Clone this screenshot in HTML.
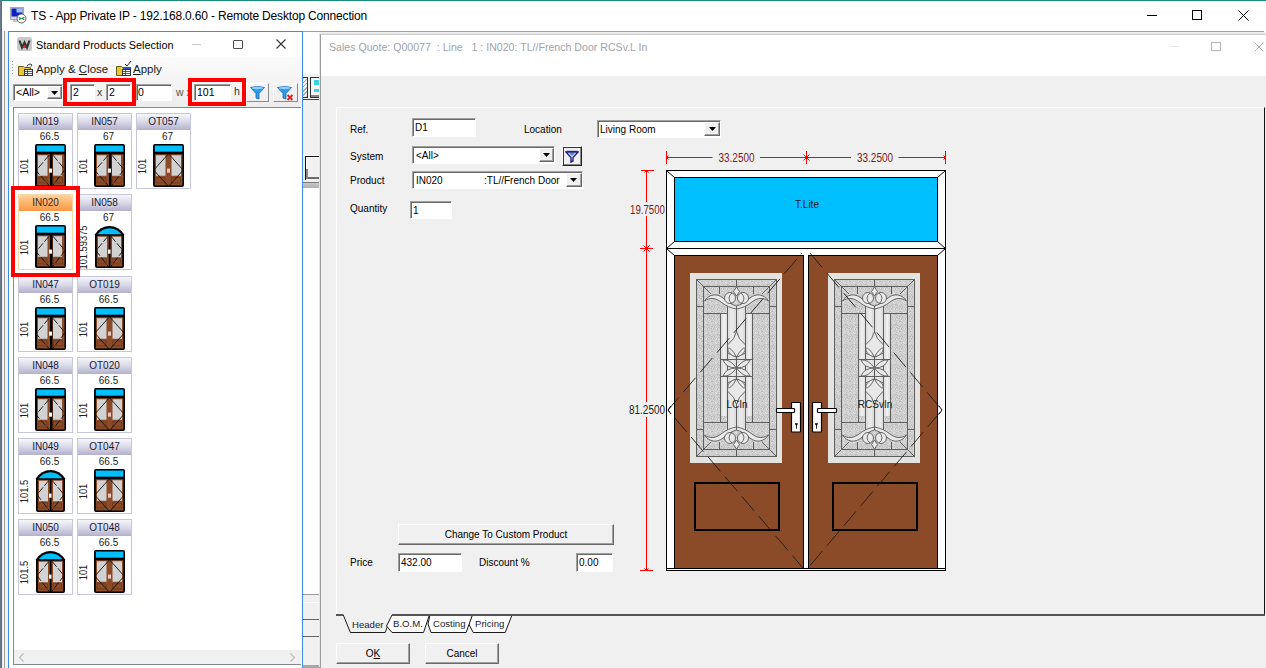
<!DOCTYPE html>
<html><head><meta charset="utf-8">
<style>
*{box-sizing:border-box;margin:0;padding:0}
html,body{width:1266px;height:668px;overflow:hidden;background:#fff;font-family:"Liberation Sans",sans-serif;position:relative}
.a{position:absolute}
.t{position:absolute;white-space:nowrap;line-height:1}
.inp{position:absolute;background:#fff;border-top:1px solid #a0a0a0;border-left:1px solid #a0a0a0;border-right:1px solid #fff;border-bottom:1px solid #fff;box-shadow:inset 1px 1px 0 #696969, 0 0 0 0 #e3e3e3}
.btn3d{position:absolute;background:#f0f0f0;border-top:1px solid #fff;border-left:1px solid #fff;border-right:1px solid #696969;border-bottom:1px solid #696969;box-shadow:inset -1px -1px 0 #a0a0a0}
.card{position:absolute;width:55px;height:76px;border:1px solid #c6c6dc;background:#fff}
.card .hd{position:absolute;left:0;top:0;right:0;height:16px;background:linear-gradient(#f6f6fa 0%,#dcdcea 45%,#b4b0cc 100%);border-radius:2px 2px 0 0;font-size:10px;color:#1a1a38;text-align:center;line-height:16px}
.card .w{position:absolute;left:0;right:0;top:17px;font-size:10px;text-align:center;color:#222;padding-left:8px}
.card .h{position:absolute;font-size:10px;color:#222;transform:rotate(-90deg) scaleX(0.93);transform-origin:center;left:-25px;width:60px;text-align:center;top:47px}

.lb{font-size:10px;color:#000}
.card .ic{position:absolute;left:16px;top:30px}
.card.sel{border-color:#f8d8a8}
.card.sel .hd{background:linear-gradient(#ffd2a0 0%,#ffb670 45%,#f89848 100%);color:#3a2a20}
</style></head><body>
<!-- outer window frame -->
<div class="a" style="left:0;top:0;width:1266px;height:1px;background:#1a8c7c"></div>
<div class="a" style="left:0;top:0;width:1px;height:668px;background:#6b7a8c"></div>
<div class="a" style="left:1px;top:0;width:1px;height:668px;background:#1a8c7c"></div>
<!-- title bar -->
<svg class="a" style="left:10px;top:7px" width="17" height="17" viewBox="0 0 17 17">
 <rect x="0.5" y="0.5" width="13" height="12" fill="#d8d8d8" stroke="#a8a8a8"/>
 <rect x="1.5" y="1.5" width="11" height="8" fill="#1020c8"/>
 <rect x="6.5" y="1.5" width="6" height="4" fill="#9cc4f4"/>
 <rect x="3" y="13" width="5" height="2" fill="#c8c8c8"/>
 <circle cx="11.5" cy="11.5" r="4.5" fill="#fff" stroke="#606060" stroke-width="1"/>
 <path d="M8.8 10.2l2 1.3-2 1.3M14.2 10.2l-2 1.3 2 1.3" stroke="#18a030" stroke-width="1.2" fill="none"/>
</svg>
<div class="t" style="left:31px;top:10px;font-size:12px;letter-spacing:-0.17px;color:#000">TS - App Private IP - 192.168.0.60 - Remote Desktop Connection</div>
<div class="a" style="left:1147px;top:15px;width:10px;height:1px;background:#000"></div>
<div class="a" style="left:1192px;top:10px;width:10px;height:10px;border:1px solid #000"></div>
<svg class="a" style="left:1238px;top:10px" width="11" height="11"><path d="M0.5 0.5L10.5 10.5M10.5 0.5L0.5 10.5" stroke="#000" stroke-width="1"/></svg>

<!-- RDP content background -->
<div class="a" style="left:2px;top:32px;width:1264px;height:636px;background:#f0f0f0"></div>
<div class="a" style="left:302px;top:31px;width:962px;height:1px;background:#a0a0a0"></div>
<div class="a" style="left:2px;top:31px;width:6px;height:637px;background:#f2f2f2"></div>
<div class="a" style="left:4px;top:31px;width:1px;height:637px;background:#a0a0a0"></div>

<svg width="0" height="0" style="position:absolute">
<defs>
<symbol id="ic_tl" viewBox="0 0 31 42">
 <rect x="0" y="0" width="31" height="42" rx="2" fill="#000"/>
 <rect x="1.8" y="1.5" width="27.6" height="6" fill="#00bfff"/>
 <rect x="2" y="10" width="13" height="30.5" fill="#8b4b28"/>
 <rect x="17.5" y="10" width="12" height="30.5" fill="#8b4b28"/>
 <rect x="3" y="11" width="9.5" height="20" fill="#d2d2d2"/>
 <rect x="18" y="11" width="9" height="20" fill="#d2d2d2"/>
 <rect x="3" y="33" width="9" height="5" fill="none" stroke="#6b3518" stroke-width="0.7"/>
 <rect x="18.5" y="33" width="9" height="5" fill="none" stroke="#6b3518" stroke-width="0.7"/>
 <path d="M14 11L1 26L15 41.5M18 11L30 25L17 41.5" stroke="#111" stroke-width="0.9" fill="none" stroke-dasharray="7 2"/>
 <rect x="14" y="24" width="3" height="4" fill="#fff"/>
</symbol>
<symbol id="ic_ot" viewBox="0 0 31 42">
 <rect x="0" y="0" width="31" height="42" rx="2" fill="#000"/>
 <rect x="1.8" y="1.5" width="27.6" height="6" fill="#00bfff"/>
 <rect x="1.8" y="10" width="27.6" height="30.5" fill="#8b4b28"/>
 <rect x="3" y="11" width="9.5" height="20" fill="#d2d2d2"/>
 <rect x="18.5" y="11" width="9.5" height="20" fill="#d2d2d2"/>
 <rect x="3" y="33" width="9" height="5" fill="none" stroke="#6b3518" stroke-width="0.7"/>
 <rect x="18.5" y="33" width="9" height="5" fill="none" stroke="#6b3518" stroke-width="0.7"/>
 <path d="M15.5 9.5L0.8 25.5L15.5 41.5L30.2 25.5Z" stroke="#111" stroke-width="0.9" fill="none"/>
 <rect x="14" y="24" width="3" height="4" fill="#f0c8c0"/>
</symbol>
<symbol id="ic_arch" viewBox="0 0 31 42">
 <path d="M1 9A17.1 17.1 0 0 1 30 9V40Q30 42 28 42H3Q1 42 1 40Z" fill="#000"/>
 <path d="M3.6 9A15.1 15.1 0 0 1 27.4 9Z" fill="#00bfff"/>
 <rect x="2.8" y="10.5" width="12" height="30" fill="#8b4b28"/>
 <rect x="16.5" y="10.5" width="11.7" height="30" fill="#8b4b28"/>
 <rect x="4" y="11.5" width="9" height="20" fill="#d2d2d2"/>
 <rect x="18" y="11.5" width="9" height="20" fill="#d2d2d2"/>
 <rect x="4" y="33" width="8.5" height="5" fill="none" stroke="#6b3518" stroke-width="0.7"/>
 <rect x="18" y="33" width="8.5" height="5" fill="none" stroke="#6b3518" stroke-width="0.7"/>
 <path d="M14 11L2 25L15 41.5M17 11L29 25L16 41.5" stroke="#111" stroke-width="0.9" fill="none" stroke-dasharray="7 2"/>
 <rect x="14" y="24" width="2.5" height="4" fill="#fff"/>
</symbol>
</defs></svg>
<!-- ============ LEFT DIALOG ============ -->
<div class="a" style="left:8px;top:31px;width:295px;height:637px;border:1px solid #3d8ee0;border-bottom:none;background:#fff"></div>
<div class="a" style="left:9px;top:57px;width:293px;height:50px;background:linear-gradient(#fbfbfb,#ededed)"></div>
<!-- title -->
<svg class="a" style="left:17px;top:37px" width="15" height="14" viewBox="0 0 15 14">
 <rect x="0" y="0" width="15" height="14" rx="2.5" fill="#c9c9c9"/>
 <path d="M2.5 3.5L5 10.5L7.5 5.5L10 10.5L12.5 3.5" stroke="#333" stroke-width="2.2" fill="none"/>
 <path d="M5.5 11L7.5 7.5L9.5 11Z" fill="#e8202a"/>
</svg>
<div class="t" style="left:36px;top:39.5px;font-size:10.85px;color:#000">Standard Products Selection</div>
<div class="a" style="left:192px;top:44px;width:9px;height:1px;background:#c8c8c8"></div>
<div class="a" style="left:233px;top:40px;width:10px;height:9px;border:1px solid #505050;border-radius:1px"></div>
<svg class="a" style="left:276px;top:39px" width="10" height="10"><path d="M0.5 0.5L9.5 9.5M9.5 0.5L0.5 9.5" stroke="#333" stroke-width="1.1"/></svg>
<!-- toolbar row 1 -->
<div class="a" style="left:12px;top:61px;width:1px;height:14px;background:repeating-linear-gradient(#999 0 1px,transparent 1px 3px)"></div>
<svg class="a" style="left:18px;top:62px" width="16" height="14" viewBox="0 0 16 14">
 <path d="M0.5 4.5h5l1 1h6v8h-12z" fill="#e8c83a" stroke="#6b5a10"/>
 <rect x="6.5" y="7.5" width="8" height="6" fill="#fff" stroke="#333"/>
 <path d="M7 9.5h7M7 11.5h7M9.5 8v5" stroke="#333" stroke-width="0.8"/>
 <path d="M9 4.5a3 3 0 0 1 5 -1.5l-1 1.5" stroke="#333" fill="none"/>
</svg>
<div class="t" style="left:36px;top:64px;font-size:11.5px;color:#1a1a1a">Apply &amp; <u>C</u>lose</div>
<svg class="a" style="left:116px;top:61px" width="16" height="15" viewBox="0 0 16 15">
 <path d="M0.5 5.5h5l1 1h6v8h-12z" fill="#e8c83a" stroke="#6b5a10"/>
 <rect x="6.5" y="8.5" width="8" height="6" fill="#fff" stroke="#333"/>
 <path d="M7 10.5h7M7 12.5h7M9.5 9v5" stroke="#333" stroke-width="0.8"/>
 <rect x="7" y="6" width="8" height="2" fill="#2a50c8"/>
 <path d="M9 3l2 2 4 -5" stroke="#222" fill="none"/>
</svg>
<div class="t" style="left:133px;top:64px;font-size:11.5px;color:#1a1a1a"><u>A</u>pply</div>
<!-- toolbar row 2 -->
<div class="inp" style="left:13px;top:84px;width:50px;height:17px"></div>
<div class="t" style="left:16px;top:87px;font-size:10.5px;color:#000">&lt;All&gt;</div>
<div class="btn3d" style="left:47px;top:86px;width:15px;height:13px"></div>
<svg class="a" style="left:51px;top:91px" width="7" height="4"><path d="M0 0h7L3.5 4z" fill="#000"/></svg>
<div class="inp" style="left:70px;top:84px;width:25px;height:17px"></div>
<div class="t" style="left:73px;top:87px;font-size:10.5px;color:#000">2</div>
<div class="t" style="left:97px;top:87px;font-size:10.5px;color:#333">x</div>
<div class="inp" style="left:106px;top:84px;width:25px;height:17px"></div>
<div class="t" style="left:109px;top:87px;font-size:10.5px;color:#000">2</div>
<div class="inp" style="left:136px;top:84px;width:36px;height:17px"></div>
<div class="t" style="left:138px;top:87px;font-size:10.5px;color:#000">0</div>
<div class="t" style="left:176px;top:87px;font-size:10.5px;color:#555">w x</div>
<div class="inp" style="left:194px;top:84px;width:37px;height:17px"></div>
<div class="t" style="left:197px;top:87px;font-size:10.5px;color:#000">101</div>
<div class="t" style="left:234px;top:86px;font-size:10.5px;color:#333">h</div>
<!-- filter buttons -->
<div class="a" style="left:246px;top:83px;width:23px;height:19px;border-right:1px solid #8a8a8a;border-bottom:1px solid #8a8a8a;border-top:1px solid #fff;border-left:1px solid #fff"></div>
<svg class="a" style="left:250px;top:86px" width="15" height="14" viewBox="0 0 15 14"><path d="M0.5 1.5Q7.5 -0.5 14.5 1.5L9 7.5V13L6 12V7.5Z" fill="#2b9be8" stroke="#1b6ab0" stroke-width="0.8"/><ellipse cx="7.5" cy="2" rx="6" ry="1.2" fill="#8fd0ff"/></svg>
<div class="a" style="left:273px;top:83px;width:25px;height:19px;border-right:1px solid #8a8a8a;border-bottom:1px solid #8a8a8a;border-top:1px solid #fff;border-left:1px solid #fff"></div>
<svg class="a" style="left:277px;top:86px" width="18" height="15" viewBox="0 0 18 15"><path d="M0.5 1.5Q7.5 -0.5 14.5 1.5L9 7.5V13L6 12V7.5Z" fill="#2b9be8" stroke="#1b6ab0" stroke-width="0.8"/><ellipse cx="7.5" cy="2" rx="6" ry="1.2" fill="#8fd0ff"/><path d="M10.5 9l5 5M15.5 9l-5 5" stroke="#e02020" stroke-width="1.8"/></svg>
<!-- red highlight boxes -->
<div class="a" style="left:63px;top:78px;width:73px;height:28px;border:4px solid #ff0000"></div>
<div class="a" style="left:188px;top:78px;width:58px;height:28px;border:4px solid #ff0000"></div>
<!-- gallery -->
<div class="a" style="left:13px;top:107px;width:288px;height:558px;border:1px solid #828790;border-right:none;background:#fff"></div>
<div class="a" style="left:14px;top:650px;width:287px;height:14px;background:#f0f0f0"></div>
<svg class="a" style="left:18px;top:653px" width="8" height="9"><path d="M5.5 0.5L1.5 4.5L5.5 8.5" stroke="#b8b8b8" stroke-width="1.1" fill="none"/></svg>
<svg class="a" style="left:289px;top:653px" width="8" height="9"><path d="M1.5 0.5L5.5 4.5L1.5 8.5" stroke="#b8b8b8" stroke-width="1.1" fill="none"/></svg>
<div class="card" style="left:18px;top:113px"><div class="hd">IN019</div><div class="w">66.5</div><div class="h">101</div><svg class="ic" width="31" height="43" viewBox="0 0 31 42" preserveAspectRatio="none"><use href="#ic_tl"/></svg></div>
<div class="card" style="left:77px;top:113px"><div class="hd">IN057</div><div class="w">67</div><div class="h">101</div><svg class="ic" width="31" height="43" viewBox="0 0 31 42" preserveAspectRatio="none"><use href="#ic_tl"/></svg></div>
<div class="card" style="left:136px;top:113px"><div class="hd">OT057</div><div class="w">67</div><div class="h">101</div><svg class="ic" width="31" height="43" viewBox="0 0 31 42" preserveAspectRatio="none"><use href="#ic_ot"/></svg></div>
<div class="card sel" style="left:18px;top:194px"><div class="hd">IN020</div><div class="w">66.5</div><div class="h">101</div><svg class="ic" width="31" height="43" viewBox="0 0 31 42" preserveAspectRatio="none"><use href="#ic_tl"/></svg></div>
<div class="card" style="left:77px;top:194px"><div class="hd">IN058</div><div class="w">67</div><div class="h">101.59375</div><svg class="ic" width="31" height="43" viewBox="0 0 31 42" preserveAspectRatio="none"><use href="#ic_arch"/></svg></div>
<div class="card" style="left:18px;top:276px"><div class="hd">IN047</div><div class="w">66.5</div><div class="h">101</div><svg class="ic" width="31" height="43" viewBox="0 0 31 42" preserveAspectRatio="none"><use href="#ic_tl"/></svg></div>
<div class="card" style="left:77px;top:276px"><div class="hd">OT019</div><div class="w">66.5</div><div class="h">101</div><svg class="ic" width="31" height="43" viewBox="0 0 31 42" preserveAspectRatio="none"><use href="#ic_ot"/></svg></div>
<div class="card" style="left:18px;top:357px"><div class="hd">IN048</div><div class="w">66.5</div><div class="h">101</div><svg class="ic" width="31" height="43" viewBox="0 0 31 42" preserveAspectRatio="none"><use href="#ic_tl"/></svg></div>
<div class="card" style="left:77px;top:357px"><div class="hd">OT020</div><div class="w">66.5</div><div class="h">101</div><svg class="ic" width="31" height="43" viewBox="0 0 31 42" preserveAspectRatio="none"><use href="#ic_ot"/></svg></div>
<div class="card" style="left:18px;top:438px"><div class="hd">IN049</div><div class="w">66.5</div><div class="h">101.5</div><svg class="ic" width="31" height="43" viewBox="0 0 31 42" preserveAspectRatio="none"><use href="#ic_arch"/></svg></div>
<div class="card" style="left:77px;top:438px"><div class="hd">OT047</div><div class="w">66.5</div><div class="h">101</div><svg class="ic" width="31" height="43" viewBox="0 0 31 42" preserveAspectRatio="none"><use href="#ic_ot"/></svg></div>
<div class="card" style="left:18px;top:519px"><div class="hd">IN050</div><div class="w">66.5</div><div class="h">101.5</div><svg class="ic" width="31" height="43" viewBox="0 0 31 42" preserveAspectRatio="none"><use href="#ic_arch"/></svg></div>
<div class="card" style="left:77px;top:519px"><div class="hd">OT048</div><div class="w">66.5</div><div class="h">101</div><svg class="ic" width="31" height="43" viewBox="0 0 31 42" preserveAspectRatio="none"><use href="#ic_ot"/></svg></div>
<div class="a" style="left:11px;top:186px;width:69px;height:91px;border:4px solid #ff0000"></div>
<!-- ============ background strip between dialogs ============ -->
<div class="a" style="left:303px;top:32px;width:17px;height:636px;background:#f0f0f0"></div>
<div class="a" style="left:303px;top:32px;width:17px;height:42px;background:#fff"></div>
<div class="a" style="left:303px;top:77px;width:5px;height:21px;border:1px solid #333;border-left:none;background:repeating-linear-gradient(135deg,#aaa 0 1px,#eee 1px 3px)"></div>
<div class="a" style="left:310px;top:77px;width:10px;height:21px;border:1px solid #333;border-right:none;background:#f4f4f4;box-shadow:inset 0 -2px 0 #888"></div>
<div class="a" style="left:314px;top:80px;width:6px;height:5px;background:#3cd0e0"></div>
<div class="a" style="left:314px;top:89px;width:6px;height:3px;background:#3cd0e0"></div>
<div class="a" style="left:303px;top:99px;width:17px;height:1px;background:#444"></div>
<div class="a" style="left:303px;top:155px;width:17px;height:2px;background:#fff"></div>
<div class="a" style="left:305px;top:156px;width:15px;height:24px;border-left:1px solid #111;border-top:1px solid #111;box-shadow:inset 1px 1px 0 #fff;background:#f0f0f0"></div>
<div class="a" style="left:306px;top:177px;width:14px;height:2px;background:#6a6a6a"></div>
<div class="a" style="left:306px;top:169px;width:2px;height:10px;background:#888"></div>
<div class="a" style="left:303px;top:182px;width:17px;height:1px;background:#777"></div>
<div class="a" style="left:303px;top:183px;width:17px;height:5px;background:linear-gradient(#c8c8c8,#b0b0b0)"></div>
<div class="a" style="left:303px;top:188px;width:17px;height:406px;background:#fff"></div>
<div class="a" style="left:303px;top:594px;width:17px;height:1px;background:#999"></div>
<div class="a" style="left:303px;top:602px;width:17px;height:1px;background:#fff"></div>
<div class="a" style="left:303px;top:619px;width:17px;height:1px;background:#666"></div>
<div class="a" style="left:303px;top:636px;width:17px;height:1px;background:#666"></div>
<div class="a" style="left:303px;top:665px;width:17px;height:3px;background:#a8a8a8"></div>
<!-- ============ MAIN DIALOG ============ -->
<div class="a" style="left:320px;top:34px;width:946px;height:634px;background:#fff;border-left:1px solid #9c9c9c;border-top:1px solid #cfcfcf;box-shadow:-1px -1px 0 #e6e6e6"></div>
<div class="t" style="left:329px;top:42px;font-size:10.6px;color:#a2a2ac">Sales Quote: Q00077 &nbsp;: Line &nbsp; 1 : IN020: TL//French Door RCSv.L In</div>
<div class="a" style="left:1169px;top:46px;width:10px;height:1px;background:#e6e6e6"></div>
<div class="a" style="left:1211px;top:42px;width:10px;height:9px;border:1px solid #b4b4b4"></div>
<svg class="a" style="left:1254px;top:42px" width="12" height="10"><path d="M0.5 0.5L9.5 9.5M9.5 0.5L0.5 9.5" stroke="#b0b0b0" stroke-width="1"/></svg>
<div class="a" style="left:321px;top:76px;width:945px;height:592px;background:#f0f0f0"></div>
<!-- inner panel -->
<div class="a" style="left:336px;top:107px;width:929px;height:508px;border-top:1px solid #fff;border-left:1px solid #fff;border-right:1px solid #111"></div>
<!-- form -->
<div class="t lb" style="left:350px;top:125px">Ref.</div>
<div class="inp" style="left:412px;top:118px;width:64px;height:19px"></div>
<div class="t lb" style="left:415px;top:123px">D1</div>
<div class="t lb" style="left:524px;top:125px">Location</div>
<div class="inp" style="left:597px;top:120px;width:124px;height:18px"></div>
<div class="t lb" style="left:600px;top:125px">Living Room</div>
<div class="btn3d" style="left:704px;top:122px;width:16px;height:14px"></div>
<svg class="a" style="left:709px;top:127px" width="7" height="4"><path d="M0 0h7L3.5 4z" fill="#000"/></svg>

<div class="t lb" style="left:350px;top:152px">System</div>
<div class="inp" style="left:412px;top:146px;width:143px;height:18px"></div>
<div class="t lb" style="left:416px;top:151px">&lt;All&gt;</div>
<div class="btn3d" style="left:539px;top:148px;width:15px;height:14px"></div>
<svg class="a" style="left:543px;top:153px" width="7" height="4"><path d="M0 0h7L3.5 4z" fill="#000"/></svg>
<div class="a" style="left:562px;top:146px;width:20px;height:20px;border:1px solid #222;border-top-color:#fff;border-left-color:#fff;box-shadow:inset 1px 1px 0 #333, inset -1px -1px 0 #888"></div>
<svg class="a" style="left:565px;top:150px" width="14" height="13" viewBox="0 0 14 13"><path d="M1 2L6 7.5V12L8 11V7.5L13 2Z" fill="none" stroke="#20208a" stroke-width="1.4"/><path d="M1.5 1.5h11" stroke="#20208a" stroke-width="1.4"/><path d="M4 3h6l-3 3z" fill="#3a8cf0"/></svg>

<div class="t lb" style="left:350px;top:176px">Product</div>
<div class="inp" style="left:412px;top:171px;width:171px;height:18px"></div>
<div class="t lb" style="left:416px;top:176px">IN020</div>
<div class="t lb" style="left:484px;top:176px">:TL//French Door</div>
<div class="btn3d" style="left:566px;top:173px;width:16px;height:14px"></div>
<svg class="a" style="left:570px;top:178px" width="7" height="4"><path d="M0 0h7L3.5 4z" fill="#000"/></svg>

<div class="t lb" style="left:350px;top:204px">Quantity</div>
<div class="inp" style="left:410px;top:201px;width:42px;height:18px"></div>
<div class="t lb" style="left:413px;top:206px">1</div>

<div class="btn3d" style="left:398px;top:524px;width:216px;height:21px"></div>
<div class="t lb" style="left:398px;top:530px;width:216px;text-align:center">Change To Custom Product</div>
<div class="t lb" style="left:350px;top:558px">Price</div>
<div class="inp" style="left:398px;top:553px;width:64px;height:19px"></div>
<div class="t lb" style="left:401px;top:558px">432.00</div>
<div class="t lb" style="left:479px;top:558px">Discount %</div>
<div class="inp" style="left:576px;top:553px;width:37px;height:19px"></div>
<div class="t lb" style="left:579px;top:558px">0.00</div>

<!-- tabs -->
<svg class="a" style="left:336px;top:610px" width="930" height="26" viewBox="0 0 930 26">
 <g stroke="#1a1a1a" stroke-width="1" stroke-linejoin="round">
 <path d="M7.3 5L14.4 22.5H49.2L53 12" fill="none"/>
 <path d="M136.4 5H176L169.2 22.5H137.2L132.8 14Z" fill="#fff"/>
 <path d="M94 5H136.4L130.1 22.5H95L92 14Z" fill="#fff"/>
 <path d="M56 5H93.4L87.5 22.5H56L50.5 16Z" fill="#fff"/>
 </g>
 <path d="M0 5H7.5M56 5H929" stroke="#555" stroke-width="2"/>
</svg>
<div class="t" style="left:352px;top:620px;font-size:9.6px;color:#1a1a30">Header</div>
<div class="t" style="left:393px;top:619px;font-size:9.6px;color:#1a1a30">B.O.M.</div>
<div class="t" style="left:433px;top:619px;font-size:9.6px;color:#1a1a30">Costing</div>
<div class="t" style="left:475px;top:619px;font-size:9.6px;color:#1a1a30">Pricing</div>

<div class="btn3d" style="left:336px;top:643px;width:74px;height:21px"></div>
<div class="t lb" style="left:336px;top:649px;width:74px;text-align:center">O<u>K</u></div>
<div class="btn3d" style="left:425px;top:643px;width:74px;height:21px"></div>
<div class="t lb" style="left:425px;top:649px;width:74px;text-align:center">Cancel</div>

<svg class="a" style="left:620px;top:145px" width="340" height="440" viewBox="0 0 340 440">
 <defs>
  <pattern id="tex" width="10" height="10" patternUnits="userSpaceOnUse"><rect width="10" height="10" fill="#cfcfcf"/><rect x="1" y="0" width="1" height="1" fill="#dadada"/><rect x="2" y="0" width="1" height="1" fill="#c4c4c4"/><rect x="3" y="0" width="1" height="1" fill="#d7d7d7"/><rect x="6" y="0" width="1" height="1" fill="#e0e0e0"/><rect x="9" y="0" width="1" height="1" fill="#d5d5d5"/><rect x="0" y="1" width="1" height="1" fill="#d9d9d9"/><rect x="3" y="1" width="1" height="1" fill="#c4c4c4"/><rect x="6" y="1" width="1" height="1" fill="#c0c0c0"/><rect x="7" y="1" width="1" height="1" fill="#bebebe"/><rect x="8" y="1" width="1" height="1" fill="#bdbdbd"/><rect x="3" y="2" width="1" height="1" fill="#c0c0c0"/><rect x="6" y="2" width="1" height="1" fill="#d5d5d5"/><rect x="7" y="2" width="1" height="1" fill="#c5c5c5"/><rect x="9" y="2" width="1" height="1" fill="#b9b9b9"/><rect x="1" y="3" width="1" height="1" fill="#b8b8b8"/><rect x="2" y="3" width="1" height="1" fill="#bfbfbf"/><rect x="3" y="3" width="1" height="1" fill="#d9d9d9"/><rect x="4" y="3" width="1" height="1" fill="#b7b7b7"/><rect x="5" y="3" width="1" height="1" fill="#d5d5d5"/><rect x="0" y="4" width="1" height="1" fill="#d8d8d8"/><rect x="4" y="4" width="1" height="1" fill="#c4c4c4"/><rect x="6" y="4" width="1" height="1" fill="#c6c6c6"/><rect x="7" y="4" width="1" height="1" fill="#d8d8d8"/><rect x="8" y="4" width="1" height="1" fill="#bbbbbb"/><rect x="9" y="4" width="1" height="1" fill="#c3c3c3"/><rect x="0" y="5" width="1" height="1" fill="#c4c4c4"/><rect x="1" y="5" width="1" height="1" fill="#b9b9b9"/><rect x="2" y="5" width="1" height="1" fill="#e1e1e1"/><rect x="3" y="5" width="1" height="1" fill="#b5b5b5"/><rect x="6" y="5" width="1" height="1" fill="#dedede"/><rect x="7" y="5" width="1" height="1" fill="#bababa"/><rect x="8" y="5" width="1" height="1" fill="#d8d8d8"/><rect x="9" y="5" width="1" height="1" fill="#c6c6c6"/><rect x="3" y="6" width="1" height="1" fill="#c2c2c2"/><rect x="6" y="6" width="1" height="1" fill="#e0e0e0"/><rect x="7" y="6" width="1" height="1" fill="#b5b5b5"/><rect x="8" y="6" width="1" height="1" fill="#dddddd"/><rect x="9" y="6" width="1" height="1" fill="#d7d7d7"/><rect x="3" y="7" width="1" height="1" fill="#dedede"/><rect x="9" y="7" width="1" height="1" fill="#c5c5c5"/><rect x="0" y="8" width="1" height="1" fill="#e2e2e2"/><rect x="1" y="8" width="1" height="1" fill="#bababa"/><rect x="2" y="8" width="1" height="1" fill="#b4b4b4"/><rect x="9" y="8" width="1" height="1" fill="#d7d7d7"/><rect x="2" y="9" width="1" height="1" fill="#e1e1e1"/><rect x="4" y="9" width="1" height="1" fill="#c4c4c4"/><rect x="5" y="9" width="1" height="1" fill="#e5e5e5"/><rect x="6" y="9" width="1" height="1" fill="#d5d5d5"/><rect x="8" y="9" width="1" height="1" fill="#c2c2c2"/></pattern>
  <symbol id="orn" viewBox="0 0 92 40" width="92" height="40">
   <g fill="none" stroke="#5a5a5a" stroke-width="0.9">
    <path d="M13.5 13.5L21 21M79.5 13.5L72 21"/>
   </g>
   <g fill="#e9e9e9" stroke="#5a5a5a" stroke-width="0.9">
    <path d="M14.5 28C19 21 27 20 33 25C38 29 42 32 46.5 33V36C41 35 36 33 31 29C26 25 20 24 14.5 28Z"/>
    <path d="M78.5 28C74 21 66 20 60 25C55 29 51 32 46.5 33V36C52 35 57 33 62 29C67 25 73 24 78.5 28Z"/>
    <circle cx="40" cy="25" r="5.5"/>
    <circle cx="53" cy="25" r="5.5"/>
    <path d="M42 20Q36 25 42 31M51 20Q57 25 51 31" fill="none"/>
    <path d="M46.5 14L49.5 18.5L46.5 23L43.5 18.5Z"/>
   </g>
  </symbol>
  <symbol id="glass" viewBox="0 0 92 190" width="92" height="190">
   <rect x="0" y="0" width="92" height="190" fill="#e3e3df"/>
   <rect x="6" y="6" width="81" height="178" fill="url(#tex)"/>
   <g fill="#e2e2e2">
    <rect x="31" y="41" width="6.5" height="102" fill="#e0e0e0"/>
    <rect x="56" y="41" width="6.5" height="102" fill="#e0e0e0"/>
    <rect x="33" y="41" width="2.5" height="102" fill="#eeeeee"/>
    <rect x="58" y="41" width="2.5" height="102" fill="#eeeeee"/>
    <rect x="38" y="33" width="17" height="124" fill="#dedede"/>
    <rect x="40" y="33" width="4" height="124" fill="#e8e8e8"/>
    <rect x="49" y="33" width="4" height="124" fill="#e8e8e8"/>
   </g>
   <g fill="none" stroke="#5e5e5e" stroke-width="1">
    <rect x="6.5" y="6.5" width="80" height="177"/>
    <rect x="13.5" y="13.5" width="66" height="163"/>
    <path d="M6.5 6.5L13.5 13.5M86.5 6.5L79.5 13.5M6.5 183.5L13.5 176.5M86.5 183.5L79.5 176.5"/>
    <path d="M46.5 6.5V13.5M46.5 176.5V183.5"/>
    <path d="M6.5 33.5H13.5M79.5 33.5H86.5M6.5 156.5H13.5M79.5 156.5H86.5"/>
    <path d="M13.5 40.5H37.5M55.5 40.5H79.5M13.5 149.5H37.5M55.5 149.5H79.5"/>
    <path d="M29.5 13.5V21M63.5 13.5V21M29.5 169V176.5M63.5 169V176.5"/>
    <path d="M30.5 40.5V149.5M62.5 40.5V149.5"/>
    <path d="M37.5 33V157M55.5 33V157M46.5 33V157"/>
    <path d="M30.5 86.5H62.5M30.5 103.5H62.5"/>
   </g>
   <use href="#orn" x="0" y="0" width="92" height="40"/>
   <g transform="translate(0 190) scale(1 -1)"><use href="#orn" x="0" y="0" width="92" height="40"/></g>
   <g fill="#e8e8e8" stroke="#5a5a5a" stroke-width="0.9">
    <path d="M46.5 58.5Q48 66 55.5 72V80L46.5 84L37.5 80V72Q45 66 46.5 58.5Z"/>
    <path d="M46.5 84Q41 74 37.5 75Q38 82 46.5 84ZM46.5 84Q52 74 55.5 75Q55 82 46.5 84Z"/>
    <path d="M46.5 95Q40 86 33 87Q36 95 46.5 95ZM46.5 95Q53 86 60 87Q57 95 46.5 95Z"/>
    <path d="M46.5 95Q40 104 33 103Q36 95 46.5 95ZM46.5 95Q53 104 60 103Q57 95 46.5 95Z"/>
    <path d="M46.5 131.5Q48 124 55.5 118V110L46.5 106L37.5 110V118Q45 124 46.5 131.5Z"/>
    <path d="M46.5 106Q41 116 37.5 115Q38 108 46.5 106ZM46.5 106Q52 116 55.5 115Q55 108 46.5 106Z"/>
   </g>
  </symbol>
 </defs>
 <!-- dimension lines -->
 <g stroke="#ff0000" stroke-width="1" fill="none">
  <path d="M46 12.5H92.5M140 12.5H231M278.5 12.5H325.5"/>
  <path d="M46.5 6V19M186.5 6V19M325.5 6V19"/>
  <path d="M183.5 9.5l6 6M189.5 9.5l-6 6"/>
  <path d="M46.5 12.5l2 -2M46.5 12.5l2 2M325.5 12.5l-2 -2M325.5 12.5l-2 2"/>
  <path d="M26.5 25V57M26.5 71V257M26.5 272V426"/>
  <path d="M21 25.5H34M20 103.5H33M20 425.5H33"/>
  <path d="M23.5 100.5l6 6M29.5 100.5l-6 6"/>
  <path d="M26.5 25.5l-2 2M26.5 25.5l2 2M26.5 425.5l-2 -2M26.5 425.5l2 -2"/>
 </g>
 <g font-family="Liberation Sans" font-size="12" fill="#7e1a1a" text-anchor="middle">
  <text x="116.5" y="17" textLength="36" lengthAdjust="spacingAndGlyphs">33.2500</text>
  <text x="255" y="17" textLength="36" lengthAdjust="spacingAndGlyphs">33.2500</text>
  <text x="27.5" y="68.5" textLength="35" lengthAdjust="spacingAndGlyphs">19.7500</text>
  <text x="27" y="269" textLength="36" lengthAdjust="spacingAndGlyphs" fill="#222">81.2500</text>
 </g>
 <!-- frame -->
 <g stroke="#000" stroke-width="1">
  <rect x="46.5" y="25.5" width="279" height="400" fill="#fff"/>
  <rect x="54.5" y="32.5" width="263" height="64" fill="#00bfff"/>
  <path d="M46.5 25.5L54.5 32.5M325.5 25.5L317.5 32.5" fill="none"/>
  <path d="M54.5 96.5L46.5 103.5L54.5 110.5M317.5 96.5L325.5 103.5L317.5 110.5" fill="none"/>
  <path d="M46.5 103.5H325.5" fill="none"/>
  <rect x="54.5" y="110.5" width="129" height="313" fill="#8b4b28"/>
  <rect x="188.5" y="110.5" width="129" height="313" fill="#8b4b28"/>
  <path d="M46.5 423.5H325.5" fill="none"/>
 </g>
 <use href="#glass" x="70" y="128"/>
 <use href="#glass" x="208" y="128"/>
 <g stroke="#000" stroke-width="2" fill="none">
  <rect x="75" y="338" width="84" height="47"/>
  <rect x="213" y="338" width="84" height="47"/>
 </g>
 <!-- handles -->
 <g stroke="#000" stroke-width="1.2" fill="#fff">
  <rect x="171.5" y="257.5" width="9" height="29.5" rx="0.8"/>
  <rect x="156.5" y="263.5" width="18" height="4" rx="0.8"/>
  <rect x="192.5" y="257.5" width="9" height="29.5" rx="0.8"/>
  <rect x="197.5" y="263.5" width="19" height="4" rx="0.8"/>
 </g>
 <path d="M174.8 278.3h3.2l-0.8 2h-0.4v3.5h-0.8v-3.5h-0.4z M194.8 278.3h3.2l-0.8 2h-0.4v3.5h-0.8v-3.5h-0.4z" fill="#000"/>
 <!-- opening lines -->
 <g stroke="#1a1a1a" stroke-width="0.9" fill="none" stroke-dasharray="19 7">
  <path d="M182 108L48 265L183 423" stroke-dashoffset="18"/>
  <path d="M190 108L322 265L188 423" stroke-dashoffset="0"/>
 </g>
 <path d="M51 261L48 265L51 269M319 261L322 265L319 269" stroke="#000" fill="none"/>
 <g font-family="Liberation Sans" font-size="10" fill="#222" text-anchor="middle">
  <text x="187" y="63">T.Lite</text>
  <text x="117" y="262.5">LCIn</text>
  <text x="255" y="262.5">RCSvIn</text>
 </g>
</svg>

</body></html>
